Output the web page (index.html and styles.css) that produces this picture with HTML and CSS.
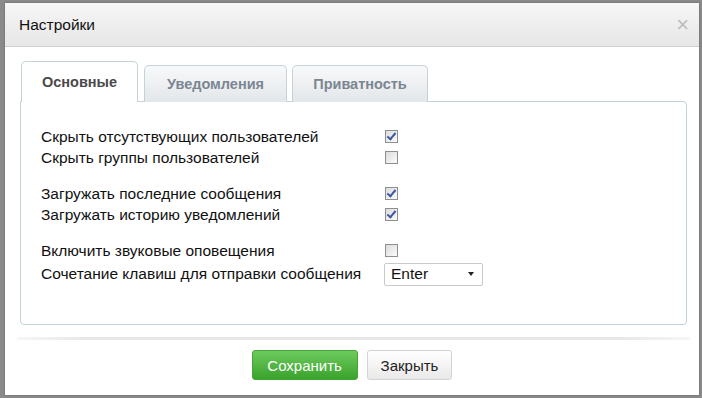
FILE: index.html
```html
<!DOCTYPE html>
<html lang="ru">
  <head>
    <meta charset="UTF-8">
    <title>Настройки</title>
    <link rel="stylesheet" href="styles.css">
  </head>
  <body>
    <!-- Settings dialog -->
    <div class="dialog">
      <div class="dialog-header">
        <span class="dialog-title">Настройки</span>
        <span class="dialog-close">×</span>
      </div>

      <div class="dialog-body">
        <div class="tabs">
          <div class="tab active">Основные</div>
          <div class="tab">Уведомления</div>
          <div class="tab">Приватность</div>
        </div>

        <div class="tab-panel">
          <div class="group">
            <div class="row"><span class="label">Скрыть отсутствующих пользователей</span><span class="check checked"></span></div>
            <div class="row"><span class="label">Скрыть группы пользователей</span><span class="check"></span></div>
          </div>
          <div class="group">
            <div class="row"><span class="label">Загружать последние сообщения</span><span class="check checked"></span></div>
            <div class="row"><span class="label">Загружать историю уведомлений</span><span class="check checked"></span></div>
          </div>
          <div class="group">
            <div class="row"><span class="label">Включить звуковые оповещения</span><span class="check"></span></div>
            <div class="row row-select">
              <span class="label">Сочетание клавиш для отправки сообщения</span>
              <div class="select"><span>Enter</span><span class="caret"></span></div>
            </div>
          </div>
        </div>
      </div>

      <div class="separator"></div>

      <div class="dialog-footer">
        <button class="btn btn-green">Сохранить</button>
        <button class="btn">Закрыть</button>
      </div>
    </div>
  </body>
</html>
```

FILE: styles.css
```css
body {
  margin: 0;
  padding: 3px 0 0 5px;
  height: 398px;
  box-sizing: border-box;
  overflow: hidden;
  background: #8a8a8a;
  font-family: Arial, "Liberation Sans", sans-serif;
}

.dialog {
  width: 694px;
  height: 392px;
  background: #fff;
  box-shadow: 0 0 2px rgba(0, 0, 0, 0.3);
  display: flex;
  flex-direction: column;
}

.dialog-header {
  height: 43px;
  border-bottom: 1px solid #d2d2d2;
  background: linear-gradient(#f6f6f6, #e7e7e7);
  display: flex;
  align-items: center;
  padding: 0 14px;
}

.dialog-title {
  font-size: 15.5px;
  color: #111;
  flex: 1;
}

.dialog-close {
  font-size: 22px;
  color: #bdbdbd;
  margin-right: -4px;
  line-height: 1;
}

.dialog-body {
  padding: 14px 12px 0 15px;
}

.tabs {
  display: flex;
  align-items: flex-end;
  padding-left: 1px;
  gap: 6px;
  margin-bottom: -1px;
  position: relative;
}

.tab {
  height: 37px;
  box-sizing: border-box;
  border: 1px solid #c3d3d9;
  border-bottom: none;
  border-radius: 5px 5px 0 0;
  background: linear-gradient(#f8f9fa, #e3e7ea);
  color: #7b8692;
  font-size: 14.5px;
  font-weight: bold;
  display: flex;
  align-items: center;
  justify-content: center;
}

.tab:nth-child(2) {
  width: 143px;
}

.tab:nth-child(3) {
  width: 136px;
  margin-left: -1px;
}

.tab.active {
  width: 117px;
  height: 41px;
  background: #fff;
  color: #4a4a4a;
  padding-top: 0;
}

.tab-panel {
  height: 224px;
  box-sizing: border-box;
  border: 1px solid #c3d3d9;
  border-radius: 0 4px 4px 4px;
  padding: 24px 20px 0 20px;
}

.group {
  margin-bottom: 15px;
}

.row {
  display: flex;
  align-items: center;
  height: 21px;
  font-size: 15.5px;
  color: #111;
}

.label {
  width: 344px;
}

.row-select {
  height: 24px;
  margin-top: 1px;
}

.check {
  width: 13px;
  height: 13px;
  box-sizing: border-box;
  border: 1px solid #8e8f8f;
  background: linear-gradient(135deg, #dcdcdc, #fbfbfb);
  position: relative;
}

.check.checked::after {
  content: "";
  position: absolute;
  left: 3px;
  top: 0px;
  width: 3px;
  height: 7px;
  border: solid #3d5aa0;
  border-width: 0 2px 2px 0;
  transform: rotate(40deg);
}

.select {
  width: 99px;
  height: 23px;
  box-sizing: border-box;
  margin-left: -1px;
  border: 1px solid #c9c9c9;
  border-radius: 2px;
  display: flex;
  align-items: center;
  padding: 0 8px 0 6px;
  font-size: 15.5px;
  color: #111;
}

.select span:first-child {
  flex: 1;
}

.caret {
  width: 0;
  height: 0;
  border-left: 3px solid transparent;
  border-right: 3px solid transparent;
  border-top: 4px solid #222;
}

.separator {
  height: 3px;
  margin: 12px 9px 0 12px;
  background: linear-gradient(90deg, #f6f6f6, #e8e8e8 10%, #e8e8e8 90%, #f6f6f6);
}

.dialog-footer {
  display: flex;
  justify-content: center;
  gap: 9px;
  padding-top: 10px;
}

.btn {
  height: 30px;
  padding: 0 13px;
  border: 1px solid #d3d3d3;
  border-radius: 3px;
  background: linear-gradient(#ffffff, #e9e9e9);
  font-family: Arial, "Liberation Sans", sans-serif;
  font-size: 15px;
  color: #222;
}

.btn-green {
  width: 106px;
  border-color: #45a536;
  background: linear-gradient(#6dcb5d, #3aa22c);
  color: #fff;
}
```
